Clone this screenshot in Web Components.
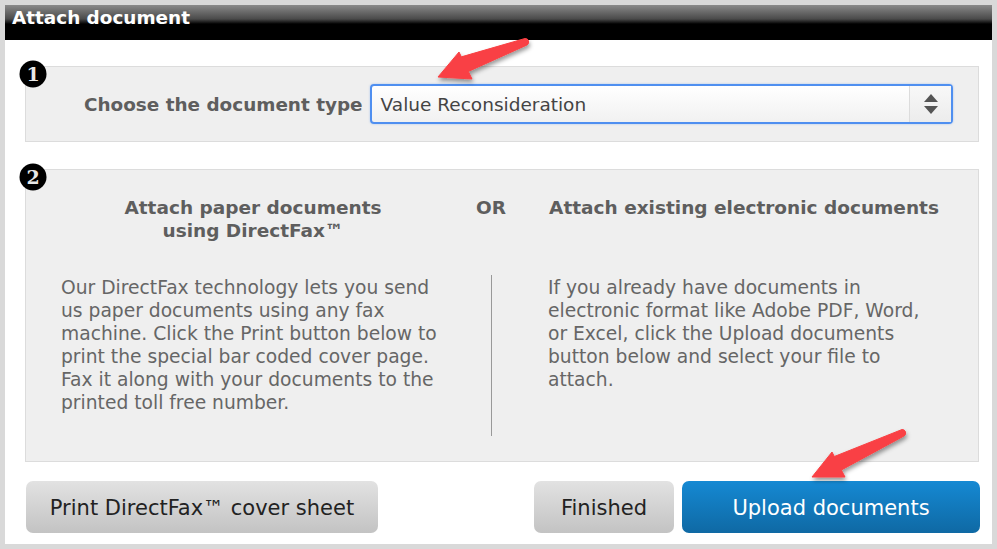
<!DOCTYPE html>
<html>
<head>
<meta charset="utf-8">
<title>Attach document</title>
<style>
  html, body { margin: 0; padding: 0; background: #d9d9d9; }
  body { width: 997px; height: 549px; overflow: hidden; font-family: "DejaVu Sans", Verdana, sans-serif; }
</style>
</head>
<body>
<attach-dialog heading="Attach document">
  <step-panel num="1" style="--panel-h:74px;--panel-mt:26px;">
    <type-picker label="Choose the document type" value="Value Reconsideration"></type-picker>
  </step-panel>
  <step-panel num="2" style="--panel-h:291px;--panel-mt:27px;">
    <fax-options></fax-options>
  </step-panel>
  <button-row slot="footer"></button-row>
  <red-arrow slot="footer" style="left:430px;top:34px;" tip="8,43" wing1="29,18" wing2="42,45" tail="95,8"></red-arrow>
  <red-arrow slot="footer" style="left:804px;top:425px;" tip="8,52" wing1="28,27" wing2="41,52" tail="98,8"></red-arrow>
</attach-dialog>

<script>
class AttachDialog extends HTMLElement {
  constructor() {
    super();
    const shadow = this.attachShadow({ mode: 'open' });
    shadow.innerHTML = `
      <style>
        :host {
          display: block;
          position: relative;
          margin: 5px 0 0 5px;
          width: 987px;
          height: 539px;
          background: #fff;
        }
        .head {
          height: 35px;
          box-sizing: border-box;
          padding: 1px 0 0 7px;
          background: linear-gradient(#8a8a8a 0, #4a4a4a 14px, #000 19px);
          color: #fff;
          font-size: 18.4px;
          font-weight: bold;
          line-height: 24px;
        }
        .body { padding: 0 13px 0 20px; }
      </style>
      <div class="head">${this.getAttribute('heading')}</div>
      <div class="body"><slot></slot></div>
      <slot name="footer"></slot>
    `;
  }
}

class StepPanel extends HTMLElement {
  constructor() {
    super();
    const shadow = this.attachShadow({ mode: 'open' });
    shadow.innerHTML = `
      <style>
        :host {
          display: block;
          position: relative;
          box-sizing: content-box;
          height: var(--panel-h);
          margin-top: var(--panel-mt);
          background: #efefef;
          border: 1px solid #dcdcdc;
        }
        svg { position: absolute; left: -7px; top: -7px; }
        text { font-family: "DejaVu Serif", serif; font-weight: bold; font-size: 19px; }
      </style>
      <svg width="28" height="28" viewBox="0 0 28 28">
        <circle cx="14" cy="14" r="13.5" fill="#000"/>
        <text x="14" y="21" fill="#e8e8e8" text-anchor="middle">${this.getAttribute('num')}</text>
      </svg>
      <slot></slot>
    `;
  }
}

class TypePicker extends HTMLElement {
  constructor() {
    super();
    const shadow = this.attachShadow({ mode: 'open' });
    shadow.innerHTML = `
      <style>
        :host {
          display: flex;
          align-items: center;
          padding: 17px 25px 0 58px;
          height: 40px;
        }
        .label {
          color: #5e5e5e;
          font-size: 18.4px;
          font-weight: bold;
          white-space: nowrap;
          margin-right: 7px;
        }
        .box {
          flex: 1;
          height: 40px;
          box-sizing: border-box;
          display: flex;
          border: 2px solid #4f8ff0;
          border-radius: 4px;
          background: linear-gradient(#fff, #f1f1f1);
          box-shadow: 0 0 2px rgba(79, 143, 240, 0.5);
        }
        .val { flex: 1; padding-left: 9px; font-size: 18.5px; line-height: 37px; color: #444; }
        .spin {
          width: 41px;
          border-left: 1px solid #dcdcdc;
          background: linear-gradient(#f8f8f8, #ececec);
          display: flex;
          align-items: center;
          justify-content: center;
        }
      </style>
      <span class="label">${this.getAttribute('label')}</span>
      <div class="box">
        <span class="val">${this.getAttribute('value')}</span>
        <span class="spin">
          <svg width="16" height="22" viewBox="0 0 16 22">
            <path d="M8 1 L15 9 H1 Z M1 13 H15 L8 21 Z" fill="#555"/>
          </svg>
        </span>
      </div>
    `;
  }
}

class FaxOptions extends HTMLElement {
  constructor() {
    super();
    const shadow = this.attachShadow({ mode: 'open' });
    shadow.innerHTML = `
      <style>
        :host {
          display: grid;
          grid-template-columns: 384px 92px 1fr;
          grid-template-rows: 79px 161px;
          padding: 26px 0 0 35px;
          color: #666;
          font-size: 18.7px;
          line-height: 23px;
        }
        h3 {
          margin: 0;
          font-size: 18.5px;
          line-height: 23px;
          font-weight: bold;
          text-align: center;
          color: #5e5e5e;
        }
        .right-h { width: 392px; margin-left: 11px; white-space: nowrap; }
        p { margin: 1px 0 0; }
        .rule { justify-self: center; width: 1px; background: #999; }
        .right-p { margin-left: 11px; width: 380px; }
      </style>
      <h3>Attach paper documents<br>using DirectFax™</h3>
      <h3>OR</h3>
      <h3 class="right-h">Attach existing electronic documents</h3>
      <p>Our DirectFax technology lets you send us paper documents using any fax machine. Click the Print button below to print the special bar coded cover page. Fax it along with your documents to the printed toll free number.</p>
      <div class="rule"></div>
      <p class="right-p">If you already have documents in electronic format like Adobe PDF, Word, or Excel, click the Upload documents button below and select your file to attach.</p>
    `;
  }
}

class ButtonRow extends HTMLElement {
  constructor() {
    super();
    const shadow = this.attachShadow({ mode: 'open' });
    shadow.innerHTML = `
      <style>
        :host {
          display: flex;
          padding: 19px 12px 0 21px;
          gap: 8px;
        }
        .btn {
          height: 52px;
          box-sizing: border-box;
          padding-top: 1px;
          display: flex;
          align-items: center;
          justify-content: center;
          border-radius: 7px;
          font-size: 21px;
          color: #222;
          background: linear-gradient(#e2e2e2, #c3c3c3);
        }
        .print { width: 352px; margin-right: auto; }
        .done { width: 140px; }
        .upload { width: 298px; color: #fff; background: linear-gradient(#1589d3, #0f69a4); }
      </style>
      <div class="btn print">Print DirectFax™ cover sheet</div>
      <div class="btn done">Finished</div>
      <div class="btn upload">Upload documents</div>
    `;
  }
}

// annotation arrows drawn over the screenshot
class RedArrow extends HTMLElement {
  constructor() {
    super();
    const tip = this.getAttribute('tip');
    const wing1 = this.getAttribute('wing1');
    const wing2 = this.getAttribute('wing2');
    const [tx, ty] = this.getAttribute('tail').split(',').map(Number);
    const [w1x, w1y] = wing1.split(',').map(Number);
    const [w2x, w2y] = wing2.split(',').map(Number);
    // neck points sit part way along each wing
    const n1 = `${w1x + (w2x - w1x) * 0.18},${w1y + (w2y - w1y) * 0.18}`;
    const n2 = `${w1x + (w2x - w1x) * 0.72},${w1y + (w2y - w1y) * 0.72}`;
    const shadow = this.attachShadow({ mode: 'open' });
    shadow.innerHTML = `
      <style>
        :host { position: absolute; display: block; width: 110px; height: 64px; margin: -5px 0 0 -5px; }
        svg { display: block; overflow: visible; }
      </style>
      <svg width="110" height="64" viewBox="0 0 110 64">
        <defs>
          <filter id="s" x="-20%" y="-20%" width="140%" height="150%">
            <feDropShadow dx="1" dy="3" stdDeviation="2" flood-color="#000" flood-opacity="0.4"/>
          </filter>
        </defs>
        <g filter="url(#s)" fill="#f94144" stroke="#f94144">
          <path d="M${tip} L${wing1} L${n1} L${tx},${ty - 3.5} A3.5 3.5 0 0 1 ${tx + 2},${ty + 3} L${n2} L${wing2} Z" stroke-width="1" stroke-linejoin="round"/>
        </g>
      </svg>
    `;
  }
}

customElements.define('attach-dialog', AttachDialog);
customElements.define('step-panel', StepPanel);
customElements.define('type-picker', TypePicker);
customElements.define('fax-options', FaxOptions);
customElements.define('button-row', ButtonRow);
customElements.define('red-arrow', RedArrow);
</script>
</body>
</html>
